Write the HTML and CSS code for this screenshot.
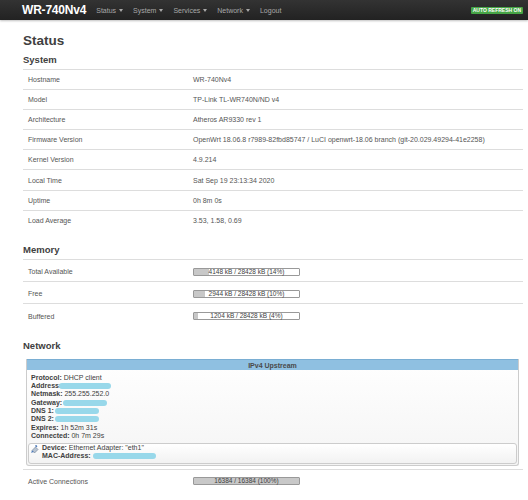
FILE: index.html
```html
<!DOCTYPE html>
<html lang="en">
<head>
<meta charset="utf-8">
<title>WR-740Nv4 - Status</title>
<link rel="stylesheet" href="styles.css">
</head>
<body>
<header class="navbar">
  <div class="nav-inner">
    <a class="brand" href="#">WR-740Nv4</a>
    <ul class="nav">
      <li>Status<span class="caret"></span></li>
      <li>System<span class="caret"></span></li>
      <li>Services<span class="caret"></span></li>
      <li>Network<span class="caret"></span></li>
      <li>Logout</li>
    </ul>
    <span class="badge">AUTO REFRESH ON</span>
  </div>
</header>

<main class="container">
  <h2>Status</h2>

  <section class="section">
    <h3>System</h3>
    <table class="tbl">
      <tr><td class="label">Hostname</td><td>WR-740Nv4</td></tr>
      <tr><td class="label">Model</td><td>TP-Link TL-WR740N/ND v4</td></tr>
      <tr><td class="label">Architecture</td><td>Atheros AR9330 rev 1</td></tr>
      <tr><td class="label">Firmware Version</td><td>OpenWrt 18.06.8 r7989-82fbd85747 / LuCI openwrt-18.06 branch (git-20.029.49294-41e2258)</td></tr>
      <tr><td class="label">Kernel Version</td><td>4.9.214</td></tr>
      <tr><td class="label">Local Time</td><td>Sat Sep 19 23:13:34 2020</td></tr>
      <tr><td class="label">Uptime</td><td>0h 8m 0s</td></tr>
      <tr><td class="label">Load Average</td><td>3.53, 1.58, 0.69</td></tr>
    </table>
  </section>

  <section class="section">
    <h3>Memory</h3>
    <table class="tbl tbl-bars">
      <tr><td class="label">Total Available</td><td><div class="bar"><div class="fill" style="width:14%"></div><span class="bar-text">4148 kB / 28428 kB (14%)</span></div></td></tr>
      <tr><td class="label">Free</td><td><div class="bar"><div class="fill" style="width:10%"></div><span class="bar-text">2944 kB / 28428 kB (10%)</span></div></td></tr>
      <tr><td class="label">Buffered</td><td><div class="bar"><div class="fill" style="width:4%"></div><span class="bar-text">1204 kB / 28428 kB (4%)</span></div></td></tr>
    </table>
  </section>

  <section class="section">
    <h3>Network</h3>
    <div class="ifacebox">
      <div class="ifacebox-head">IPv4 Upstream</div>
      <div class="ifacebox-body">
        <div class="line"><b>Protocol:</b> DHCP client</div>
        <div class="line"><b>Address:</b><span class="redact r-addr"></span></div>
        <div class="line"><b>Netmask:</b> 255.255.252.0</div>
        <div class="line"><b>Gateway:</b><span class="redact r-gw"></span></div>
        <div class="line"><b>DNS 1:</b><span class="redact r-dns"></span></div>
        <div class="line"><b>DNS 2:</b><span class="redact r-dns"></span></div>
        <div class="line"><b>Expires:</b> 1h 52m 31s</div>
        <div class="line"><b>Connected:</b> 0h 7m 29s</div>
        <div class="devbox">
          <svg class="dev-icon" width="8" height="8" viewBox="0 0 8 8" aria-hidden="true">
            <path d="M1 5.5 L4.5 2 L7 4.5 L3.5 8 Z" fill="#b8c4d2" stroke="#6a7c92" stroke-width="0.6"/>
            <path d="M0.5 7.5 L2.2 5.8" stroke="#4a78b8" stroke-width="1.2"/>
            <rect x="4.2" y="0.3" width="2" height="1.6" fill="#4a78b8" transform="rotate(45 5.2 1.1)"/>
          </svg>
          <div class="dev-text">
            <div class="line"><b>Device:</b> Ethernet Adapter: "eth1"</div>
            <div class="line"><b>MAC-Address:</b> <span class="redact r-mac"></span></div>
          </div>
        </div>
      </div>
    </div>
    <table class="tbl tbl-bars tbl-conn">
      <tr><td class="label">Active Connections</td><td><div class="bar"><div class="fill" style="width:100%"></div><span class="bar-text">16384 / 16384 (100%)</span></div></td></tr>
    </table>
  </section>
</main>
</body>
</html>
```

FILE: styles.css
```css
* { box-sizing: border-box; }

body {
  margin: 0;
  font-family: "Liberation Sans", Arial, Helvetica, sans-serif;
  color: #404040;
  background: #fff;
}

/* ---------- navbar ---------- */
.navbar {
  height: 20px;
  background: linear-gradient(#333, #222);
  box-shadow: 0 1px 2px rgba(0, 0, 0, 0.25);
}

.nav-inner {
  display: flex;
  align-items: center;
  height: 20px;
  padding: 0 5px 0 22px;
}

.brand {
  font-size: 12px;
  font-weight: bold;
  color: #fff;
  text-decoration: none;
  letter-spacing: -0.2px;
  margin-right: 5px;
}

.nav {
  display: flex;
  list-style: none;
  margin: 0;
  padding: 0;
}

.nav li {
  display: flex;
  align-items: center;
  font-size: 7px;
  color: #a8a8a8;
  padding: 0 5px;
}

.caret {
  display: inline-block;
  margin-left: 3px;
  border-top: 3px solid #a8a8a8;
  border-left: 2.5px solid transparent;
  border-right: 2.5px solid transparent;
}

.badge {
  margin-left: auto;
  background: #46a546;
  color: #fff;
  font-size: 5px;
  font-weight: bold;
  line-height: 5px;
  padding: 1px 2px;
  border-radius: 1px;
}

/* ---------- content ---------- */
.container {
  padding: 0 5px 0 23px;
}

h2 {
  font-size: 13.5px;
  line-height: 16px;
  margin: 12.5px 0 5.5px;
  color: #404040;
}

h3 {
  font-size: 9.5px;
  line-height: 12px;
  margin: 0 0 3px;
  color: #404040;
}

.section + .section {
  margin-top: 14px;
}

.tbl {
  width: 100%;
  border-collapse: collapse;
  font-size: 7px;
  color: #555;
}

.tbl td {
  border-top: 1px solid #ddd;
  height: 20.1px;
  padding: 0 5px;
  vertical-align: middle;
}

.tbl td.label {
  width: 165px;
}

.tbl-bars td {
  height: 22px;
  padding-top: 2px;
}

/* progress bars */
.bar {
  display: grid;
  width: 107px;
  height: 8px;
  border: 1px solid #999;
  border-radius: 1px;
  background: #fff;
}

.fill {
  grid-area: 1 / 1;
  height: 100%;
  background: #c8c8c8;
}

.bar-text {
  grid-area: 1 / 1;
  font-size: 6.5px;
  line-height: 6px;
  text-align: center;
  color: #404040;
}

/* interface box */
.ifacebox {
  margin: 7px 4px 0 3px;
  border: 1px solid #ccc;
  border-top: none;
  border-radius: 0 0 3px 3px;
  background: linear-gradient(#fff, #f4f4f4);
  font-size: 7px;
  color: #404040;
}

.ifacebox-head {
  height: 11px;
  line-height: 11px;
  text-align: center;
  font-weight: bold;
  color: #4a4a4a;
  background: #8fc0e1;
  border-top: 1px solid #7aaed3;
}

.ifacebox-body {
  padding: 4px 1px 1px 1px;
  line-height: 8.3px;
}

.ifacebox-body > .line {
  padding-left: 3px;
}

.redact {
  display: inline-block;
  height: 6px;
  vertical-align: middle;
  border-radius: 3px;
  background: #98d8ea;
  filter: blur(0.4px);
}

.r-addr { width: 52px; margin-left: -2px; }
.r-gw { width: 44px; margin-left: 1px; }
.r-dns { width: 44px; margin-left: 1px; }
.r-mac { width: 63px; }

.devbox {
  display: flex;
  gap: 3px;
  margin-top: 2.5px;
  border: 1px solid #ccc;
  border-radius: 3px;
  padding: 0 2px 2.5px;
  background: linear-gradient(#fff, #f2f2f2);
}

.dev-icon {
  flex: none;
  margin-top: 1px;
}

.tbl-conn {
  margin-top: 3px;
}
```
